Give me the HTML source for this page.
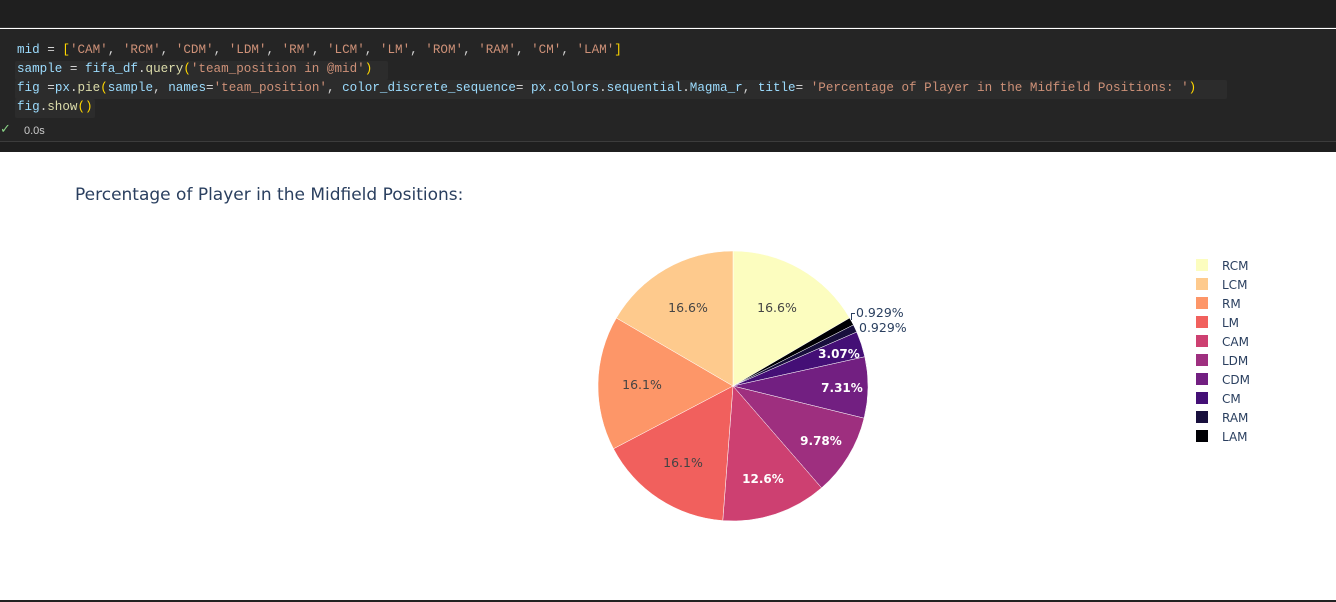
<!DOCTYPE html>
<html><head><meta charset="utf-8"><style>
*{margin:0;padding:0;box-sizing:border-box}
body{width:1336px;height:602px;overflow:hidden;background:#fff;font-family:"DejaVu Sans",sans-serif;position:relative}
#top{position:absolute;left:0;top:0;width:1336px;height:28px;background:#1f1f1f;border-bottom:1px solid #333}
#cell{position:absolute;left:0;top:29px;width:1336px;height:123px;background:#252525}
.code{position:absolute;left:17px;font-family:"Liberation Mono",monospace;font-size:12.6px;line-height:19px;color:#d4d4d4;white-space:pre}
.hl{position:absolute;left:15px;height:19px;background:#2c2c2c;border-radius:2px}
.v{color:#9cdcfe}.s{color:#ce9178}.b{color:#ffd700}.f{color:#dcdcaa}
#sep{position:absolute;left:0;top:141px;width:1336px;height:1px;background:#3c3c3c}
#bot{position:absolute;left:0;top:142px;width:1336px;height:10px;background:#1f1f1f}
#title{position:absolute;left:75px;top:185px;font-size:17px;color:#2a3f5f}
#botline{position:absolute;left:0;top:600px;width:1336px;height:2px;background:#222}
</style></head><body>
<div id="top"></div>
<div id="cell">
<div class="hl" style="top:32px;width:373px"></div>
<div class="hl" style="top:51px;width:1212px"></div>
<div class="hl" style="top:70px;width:80px"></div>
<div class="code" style="top:12px"><span class="v">mid</span> = <span class="b">[</span><span class="s">'CAM'</span>, <span class="s">'RCM'</span>, <span class="s">'CDM'</span>, <span class="s">'LDM'</span>, <span class="s">'RM'</span>, <span class="s">'LCM'</span>, <span class="s">'LM'</span>, <span class="s">'ROM'</span>, <span class="s">'RAM'</span>, <span class="s">'CM'</span>, <span class="s">'LAM'</span><span class="b">]</span>
<span class="v">sample</span> = <span class="v">fifa_df</span>.<span class="f">query</span><span class="b">(</span><span class="s">'team_position in @mid'</span><span class="b">)</span>
<span class="v">fig</span> =<span class="v">px</span>.<span class="f">pie</span><span class="b">(</span><span class="v">sample</span>, <span class="v">names</span>=<span class="s">'team_position'</span>, <span class="v">color_discrete_sequence</span>= <span class="v">px</span>.<span class="v">colors</span>.<span class="v">sequential</span>.<span class="v">Magma_r</span>, <span class="v">title</span>= <span class="s">'Percentage of Player in the Midfield Positions: '</span><span class="b">)</span>
<span class="v">fig</span>.<span class="f">show</span><span class="b">()</span></div>
<div style="position:absolute;left:0;top:93px;color:#89d185;font-size:13px">✓</div>
<div style="position:absolute;left:24px;top:96px;color:#ccc;font-size:11px;font-family:'Liberation Sans',sans-serif">0.0s</div>
</div>
<div id="sep"></div><div id="bot"></div>
<div id="title">Percentage of Player in the Midfield Positions:</div>
<svg id="pie" width="1336" height="602" style="position:absolute;left:0;top:0" font-family="DejaVu Sans, sans-serif"></svg>
<div id="botline"></div>
<script>
var d=[["RCM",16.6,"#fcfdbf"],["LAM",0.929,"#000004"],["RAM",0.929,"#180f3d"],["CM",3.07,"#440f76"],["CDM",7.31,"#721f81"],["LDM",9.78,"#9e2f7f"],["CAM",12.6,"#cd4071"],["LM",16.1,"#f1605d"],["RM",16.1,"#fd9668"],["LCM",16.6,"#feca8d"]];
var cx=733,cy=386,r=135,tot=0;d.forEach(function(a){tot+=a[1]});
var s="",a0=0;
d.forEach(function(a){var a1=a0+a[1]/tot*2*Math.PI;
var x0=cx+r*Math.sin(a0),y0=cy-r*Math.cos(a0),x1=cx+r*Math.sin(a1),y1=cy-r*Math.cos(a1);
s+='<path d="M'+cx+','+cy+'L'+x0+','+y0+'A'+r+','+r+' 0 '+((a1-a0)>Math.PI?1:0)+' 1 '+x1+','+y1+'Z" fill="'+a[2]+'" stroke="#fff" stroke-width="0.5"/>';a0=a1;});
var L=[["16.6%",777,312,"#444",0,"middle"],["16.6%",688,312,"#444",0,"middle"],["16.1%",642,389,"#444",0,"middle"],["16.1%",683,467,"#444",0,"middle"],["12.6%",763,483,"#fff",1,"middle"],["9.78%",821,445,"#fff",1,"middle"],["7.31%",842,392,"#fff",1,"middle"],["3.07%",839,358,"#fff",1,"middle"],["0.929%",856,317,"#2a3f5f",0,"start"],["0.929%",859,332,"#2a3f5f",0,"start"]];
L.forEach(function(l){s+='<text x="'+l[1]+'" y="'+l[2]+'" font-size="'+(l[4]?12:12.5)+'" text-anchor="'+l[5]+'" fill="'+l[3]+'"'+(l[4]?' font-weight="bold"':'')+'>'+l[0]+'</text>'});
s+='<path d="M851.5,320 V313.5 H855" stroke="#2a3f5f" fill="none" stroke-width="1"/>';
var lg=["RCM","LCM","RM","LM","CAM","LDM","CDM","CM","RAM","LAM"];
lg.forEach(function(n,i){var c=d.filter(function(a){return a[0]==n})[0][2];var y=259+i*19;
s+='<rect x="1196" y="'+y+'" width="12" height="12" fill="'+c+'"/><text x="1222" y="'+(y+11)+'" font-size="12" fill="#2a3f5f">'+n+'</text>';});
document.getElementById("pie").innerHTML=s;
</script>
</body></html>
